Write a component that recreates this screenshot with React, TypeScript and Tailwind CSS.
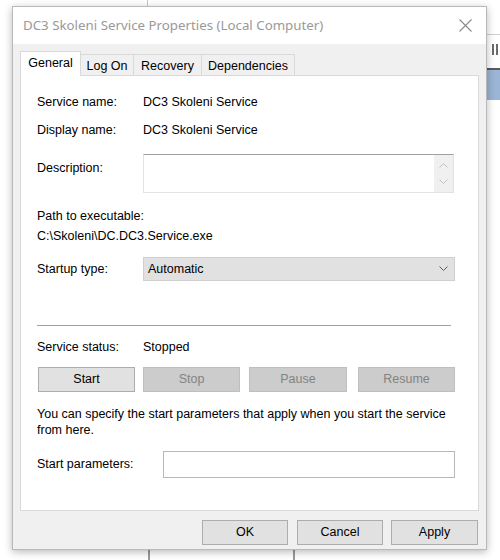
import React from 'react';

const font = { fontFamily: '"Liberation Sans", Arial, sans-serif' };

function Chevron({ up, className }: { up?: boolean; className?: string }) {
  return (
    <svg width="9" height="6" viewBox="0 0 9 6" className={className}>
      <path
        d={up ? 'M0.5 5.5 L4.5 1.5 L8.5 5.5' : 'M0.5 0.5 L4.5 4.5 L8.5 0.5'}
        fill="none"
        stroke="currentColor"
        strokeWidth="1"
      />
    </svg>
  );
}

function Btn({ label, disabled, className }: { label: string; disabled?: boolean; className?: string }) {
  return (
    <div
      className={
        'flex h-[25px] items-center justify-center border text-[12.5px] ' +
        (disabled
          ? 'border-[#bfbfbf] bg-[#cccccc] text-[#838383] '
          : 'border-[#adadad] bg-[#e1e1e1] text-black ') +
        (className ?? '')
      }
    >
      {label}
    </div>
  );
}

// Desktop bits peeking out behind the dialog
function Backdrop() {
  return (
    <>
      <div className="absolute left-[147px] top-0 h-[8px] w-[1px] bg-[#c8c8c8]" />
      <div className="absolute left-[148px] top-[548px] h-[12px] w-[2px] bg-[#9a9a9a]" />
      <div className="absolute left-[293px] top-[548px] h-[12px] w-[2px] bg-[#9a9a9a]" />
      <div className="absolute left-[487px] top-[34px] h-[1px] w-[13px] bg-[#d0d0d0]" />
      <div className="absolute left-[492px] top-[44px] h-[11px] w-[2px] bg-[#6b6b6b]" />
      <div className="absolute left-[496px] top-[44px] h-[11px] w-[2px] bg-[#6b6b6b]" />
      <div className="absolute left-[487px] top-[68px] h-[2px] w-[13px] bg-[#5a5a5a]" />
      <div className="absolute left-[487px] top-[70px] h-[30px] w-[13px] bg-[#9bb5d6]" />
    </>
  );
}

export default function App() {
  return (
    <div className="relative h-[560px] w-[500px] overflow-hidden bg-white" style={font}>
      <Backdrop />

      {/* Dialog window */}
      <div className="absolute left-[12px] top-[6px] flex h-[544px] w-[475px] flex-col border border-[#b9b9b9] bg-[#f0f0f0] shadow-[0_2px_8px_rgba(0,0,0,0.28)]">
        {/* Title bar */}
        <div className="flex h-[37px] items-center justify-between bg-white pl-[10px] pr-[14px]">
          <span
            className="text-[13.3px] text-[#999999]"
            style={{ fontFamily: '"Noto Sans", "Open Sans", sans-serif' }}
          >
            DC3 Skoleni Service Properties (Local Computer)
          </span>
          <svg width="13" height="13" viewBox="0 0 13 13" className="text-[#8a8a8a]">
            <path d="M0.5 0.5 L12.5 12.5 M12.5 0.5 L0.5 12.5" stroke="currentColor" strokeWidth="1.1" />
          </svg>
        </div>

        <div className="flex flex-1 flex-col px-[7px] pt-[7px]">
          {/* Tabs */}
          <div className="relative z-10 flex h-[24px] items-end text-[12.5px]">
            <div className="-mb-[1px] flex h-[25px] w-[61px] items-center justify-center border border-b-0 border-[#d9d9d9] bg-white pb-[2px] text-black">
              General
            </div>
            <div className="flex h-[21px] w-[53px] items-center justify-center border border-b-0 border-l-0 border-[#d9d9d9] bg-[#f0f0f0] pt-[2px] text-black">
              Log On
            </div>
            <div className="flex h-[21px] w-[68px] items-center justify-center border border-b-0 border-l-0 border-[#d9d9d9] bg-[#f0f0f0] pt-[2px] text-black">
              Recovery
            </div>
            <div className="flex h-[21px] w-[93px] items-center justify-center border border-b-0 border-l-0 border-[#d9d9d9] bg-[#f0f0f0] pt-[2px] text-black">
              Dependencies
            </div>
          </div>

          {/* Tab panel */}
          <div className="flex h-[436px] flex-col border border-[#d9d9d9] bg-white pl-[16px] pt-[18px] text-[12.5px] text-black">
            <div className="flex h-[16px] items-center">
              <span className="w-[106px]">Service name:</span>
              <span>DC3 Skoleni Service</span>
            </div>
            <div className="mt-[12px] flex h-[16px] items-center">
              <span className="w-[106px]">Display name:</span>
              <span>DC3 Skoleni Service</span>
            </div>

            <div className="mt-[16px] flex">
              <span className="w-[106px] pt-[5px]">Description:</span>
              <div className="flex h-[39px] w-[311px] border border-t-[#a0a0a0] border-l-[#e3e3e3] border-r-[#e3e3e3] border-b-[#e3e3e3]">
                <div className="flex-1" />
                <div className="flex w-[19px] flex-col items-center justify-center gap-[11px] bg-[#f0f0f0] text-[#c2c2c2]">
                  <Chevron up />
                  <Chevron />
                </div>
              </div>
            </div>

            <div className="mt-[15px] h-[16px] leading-[16px]">Path to executable:</div>
            <div className="mt-[4px] h-[16px] leading-[16px]">C:\Skoleni\DC.DC3.Service.exe</div>

            <div className="mt-[13px] flex items-center">
              <span className="w-[106px]">Startup type:</span>
              <div className="flex h-[24px] w-[312px] items-center justify-between border border-[#cfcfcf] bg-[#e1e1e1] pl-[4px] pr-[6px]">
                <span>Automatic</span>
                <Chevron className="text-[#606060]" />
              </div>
            </div>

            <div className="mt-[44px] h-[1px] w-[414px] bg-[#a0a0a0]" />

            <div className="mt-[13px] flex h-[16px] items-center">
              <span className="w-[106px]">Service status:</span>
              <span>Stopped</span>
            </div>

            <div className="mt-[12px] flex">
              <Btn label="Start" className="ml-[1px] w-[97px]" />
              <Btn label="Stop" disabled className="ml-[8px] w-[97px]" />
              <Btn label="Pause" disabled className="ml-[9px] w-[98px]" />
              <Btn label="Resume" disabled className="ml-[11px] w-[97px]" />
            </div>

            <p className="mt-[14px] w-[418px] leading-[16px]">
              You can specify the start parameters that apply when you start the service from here.
            </p>

            <div className="mt-[13px] flex items-center">
              <span className="w-[126px]">Start parameters:</span>
              <div className="h-[27px] w-[292px] border border-[#b8b8b8] bg-white" />
            </div>
          </div>

          {/* Dialog buttons */}
          <div className="mt-[9px] flex justify-end pr-[1px]">
            <Btn label="OK" className="w-[86px]" />
            <Btn label="Cancel" className="ml-[9px] w-[86px]" />
            <Btn label="Apply" className="ml-[8px] w-[87px]" />
          </div>
        </div>
      </div>
    </div>
  );
}
